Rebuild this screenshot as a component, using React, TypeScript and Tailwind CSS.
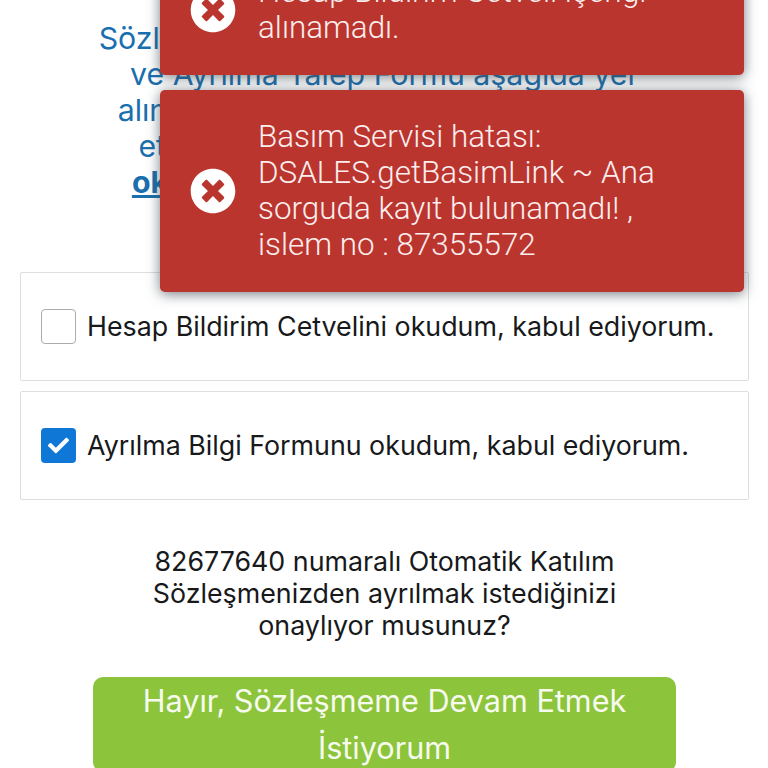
import React from "react";
import { FaCheck, FaTimesCircle } from "react-icons/fa";

const toasts = [
  "Hesap Bildirim Cetveli içeriği alınamadı.",
  "Basım Servisi hatası: DSALES.getBasimLink ~ Ana sorguda kayıt bulunamadı! , islem no : 87355572",
];

const Toast = ({ message }: { message: string }) => (
  <div className="flex items-center rounded-[5px] bg-[#bb352f] py-[29px] pl-[30px] pr-[46px] shadow-[0_2px_13px_rgba(60,70,80,0.7)]">
    <FaTimesCircle className="shrink-0 text-white" size={46} />
    <p className="ml-[22px] font-['Roboto',sans-serif] text-[31.4px] leading-[36px] font-light text-[#fbeeee]">
      {message}
    </p>
  </div>
);

const AgreementRow = ({ label, checked }: { label: string; checked?: boolean }) => (
  <label className="flex h-[109px] items-center rounded-[2px] border border-[#dcdedf] bg-white pl-[20px]">
    {checked ? (
      <span className="flex h-[35px] w-[35px] items-center justify-center rounded-[4px] bg-[#0f78d6]">
        <FaCheck className="text-white" size={21} />
      </span>
    ) : (
      <span className="h-[35px] w-[35px] rounded-[4px] border border-[#a9acaf] bg-white" />
    )}
    <span className="ml-[11px] text-[26.8px] text-[#17191b]">{label}</span>
  </label>
);

export default function App() {
  return (
    <div className="relative h-[768px] overflow-hidden bg-white font-['Inter',sans-serif]">
      <div className="pl-[20px] pr-[19px] pt-[20px]">
        <p className="text-center text-[30.3px] leading-[36px] whitespace-nowrap text-[#1a6fae]">
          Sözleşmeden ayrılma için Hesap Cetveli
          <br />
          ve Ayrılma Talep Formu aşağıda yer
          <br />
          alınmıştır. Lütfen bu formları inceleyip
          <br />
          etmektedir. Lütfen formları okuyup
          <br />
          <a href="#" className="font-bold underline">
            okumak için lütfen buraya tıklayın.
          </a>
        </p>

        <div className="mt-[72px] flex flex-col gap-[10px]">
          <AgreementRow label="Hesap Bildirim Cetvelini okudum, kabul ediyorum." />
          <AgreementRow label="Ayrılma Bilgi Formunu okudum, kabul ediyorum." checked />
        </div>

        <p className="mx-auto mt-[45px] w-[520px] text-center text-[26.8px] leading-[32px] text-[#17191b]">
          82677640 numaralı Otomatik Katılım Sözleşmenizden ayrılmak istediğinizi onaylıyor musunuz?
        </p>

        <button className="mx-auto mt-[36px] block w-[583px] rounded-[10px] bg-[#8cc43c] px-[30px] pb-[1px] text-center text-[30.6px] leading-[47px] text-[#f7fbef]">
          Hayır, Sözleşmeme Devam Etmek İstiyorum
        </button>
      </div>

      {/* toast stack sits over the page */}
      <div className="absolute left-[160px] top-[-55px] flex w-[584px] flex-col gap-[15px]">
        {toasts.map((message) => (
          <Toast key={message} message={message} />
        ))}
      </div>
    </div>
  );
}
